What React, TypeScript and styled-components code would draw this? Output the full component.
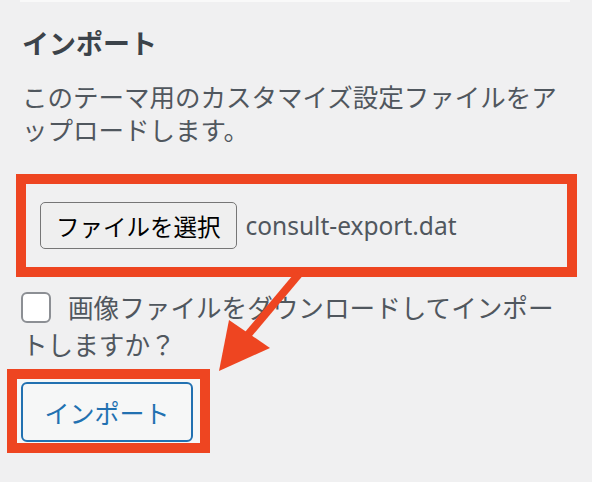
import React from 'react';
import styled, { createGlobalStyle } from 'styled-components';

const accent = '#ee4521';

const GlobalStyle = createGlobalStyle`
  body {
    margin: 0;
    background: #f0f0f1;
    font-family: "Noto Sans", "Noto Sans CJK JP", sans-serif;
  }
`;

const Page = styled.div`
  position: relative;
  width: 592px;
  height: 482px;
  overflow: hidden;
`;

const PanelEdge = styled.div`
  margin: 0 22px 0 20px;
  height: 2px;
  background: #f9f9f9;
`;

const Section = styled.div`
  padding: 0 22px;
`;

const Heading = styled.h3`
  margin: 26px 0 0;
  font-size: 27px;
  font-weight: 700;
  line-height: 1.2;
  color: #3c434a;
`;

const Description = styled.p`
  margin: 21px 0 0;
  font-size: 25.5px;
  line-height: 33px;
  color: #50575e;
`;

const Highlight = styled.div<{ $pad: string; $fill?: string }>`
  border: 10px solid ${accent};
  padding: ${(p) => p.$pad};
  background: ${(p) => p.$fill || 'transparent'};
`;

const FileBox = styled(Highlight)`
  margin: 27px -7px 0 -6px;
  display: flex;
  align-items: center;
`;

const FileButton = styled.button`
  height: 47px;
  padding: 0 15px;
  border: 1.5px solid #767676;
  border-radius: 5px;
  background: #efefef;
  color: #000;
  font-family: inherit;
  font-size: 23.5px;
`;

const FileName = styled.span`
  margin-left: 9px;
  font-size: 24.5px;
  color: #50575e;
`;

const CheckLabel = styled.label`
  display: block;
  margin: 13px 0 0;
  font-size: 25.6px;
  line-height: 37px;
  color: #50575e;
`;

const Check = styled.input`
  appearance: none;
  display: inline-block;
  vertical-align: top;
  width: 30px;
  height: 31px;
  margin: 2px 17px 0 -1px;
  border: 2px solid #8c8f94;
  border-radius: 6px;
  background: #fff;
  box-sizing: border-box;
`;

const ImportBox = styled(Highlight)`
  display: inline-block;
  margin: 5px 0 0 -15px;
`;

const ImportButton = styled.button`
  display: block;
  width: 172px;
  height: 60px;
  border: 2px solid #2271b1;
  border-radius: 6px;
  background: #f6f7f7;
  color: #2271b1;
  font-family: inherit;
  font-size: 25px;
`;

const Arrow = styled.svg`
  position: absolute;
  left: 0;
  top: 0;
  pointer-events: none;
`;

export default function App() {
  return (
    <Page>
      <GlobalStyle />
      <PanelEdge />
      <Section>
        <Heading>インポート</Heading>
        <Description>
          このテーマ用のカスタマイズ設定ファイルをアップロードします。
        </Description>
        <FileBox $pad="18px 14px">
          <FileButton>ファイルを選択</FileButton>
          <FileName>consult-export.dat</FileName>
        </FileBox>
        <CheckLabel>
          <Check type="checkbox" />
          画像ファイルをダウンロードしてインポートしますか？
        </CheckLabel>
        <ImportBox $pad="3px 7px 1px 4px" $fill="#f6f7f7">
          <ImportButton>インポート</ImportButton>
        </ImportBox>
      </Section>
      <Arrow width="592" height="482" viewBox="0 0 592 482">
        <line x1="299" y1="274" x2="246" y2="337" stroke={accent} strokeWidth="8" />
        <polygon points="219,371 229,320 270,348" fill={accent} />
      </Arrow>
    </Page>
  );
}
